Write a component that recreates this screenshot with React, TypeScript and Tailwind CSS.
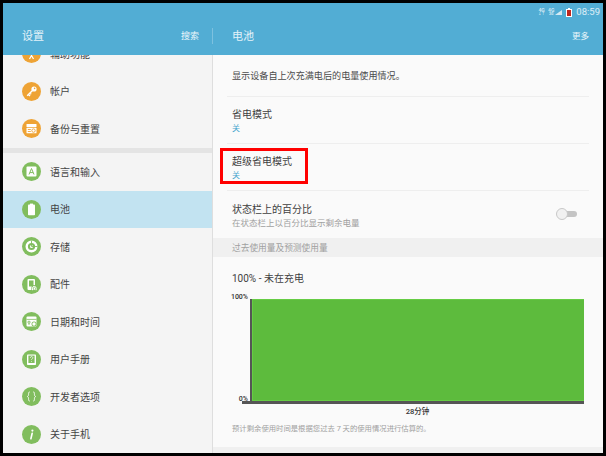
import React from "react";

const FONT = "[font-family:Roboto,'Noto_Sans_CJK_SC','Noto_Sans',sans-serif]";

function G({ children }: { children: React.ReactNode }) {
  return (
    <svg viewBox="0 0 19 19" className="w-[19px] h-[19px]" fill="none">
      {children}
    </svg>
  );
}

const icons: Record<string, React.ReactNode> = {
  access: (
    <G>
      <circle cx="9.5" cy="6" r="1.3" fill="#fff" />
      <path d="M6.5 8h6M9.5 8v3.5M9.5 11.5l-2 3.5M9.5 11.5l2 3.5" stroke="#fff" strokeWidth="1.2" />
    </G>
  ),
  key: (
    <G>
      <circle cx="12" cy="7" r="2.6" fill="#fff" />
      <circle cx="12.6" cy="6.4" r="0.8" fill="#eea335" />
      <path d="M10.5 8.5L5.2 13.8M6.5 12.5l1.5 1.5M8 11l1.2 1.2" stroke="#fff" strokeWidth="1.4" />
    </G>
  ),
  backup: (
    <G>
      <rect x="4.5" y="5" width="10" height="3" rx="0.6" fill="#fff" />
      <rect x="4.5" y="8.8" width="10" height="5.5" rx="0.6" fill="#fff" />
      <circle cx="11.5" cy="11.6" r="1.7" stroke="#eea335" strokeWidth="0.9" />
      <path d="M5.8 10.5h3M5.8 12.5h3" stroke="#eea335" strokeWidth="0.9" />
    </G>
  ),
  lang: (
    <G>
      <rect x="4.5" y="4.5" width="10" height="10" rx="1" fill="#fff" />
      <path d="M7 12.5l2.5-6 2.5 6M7.9 10.6h3.2" stroke="#81bd5e" strokeWidth="1" />
    </G>
  ),
  battery: (
    <G>
      <rect x="8" y="3.6" width="3" height="1.4" fill="#fff" />
      <rect x="6" y="4.6" width="7" height="10.6" rx="0.8" fill="#fff" />
    </G>
  ),
  storage: (
    <G>
      <circle cx="9.5" cy="9.5" r="4.8" stroke="#fff" strokeWidth="2.4" />
      <circle cx="9.5" cy="9.5" r="1.5" fill="#fff" />
      <path d="M9.5 3.5v6h6" stroke="#81bd5e" strokeWidth="0.9" />
    </G>
  ),
  parts: (
    <G>
      <rect x="5.5" y="4" width="7.5" height="11" rx="1" fill="#fff" />
      <rect x="7" y="5.5" width="4.5" height="6" fill="#81bd5e" />
      <path d="M10.5 15v-2a1.8 1.8 0 0 1 3.6 0v2" stroke="#81bd5e" strokeWidth="2.2" />
      <path d="M10.5 15.2v-2a1.8 1.8 0 0 1 3.6 0v2" stroke="#fff" strokeWidth="1" />
    </G>
  ),
  date: (
    <G>
      <rect x="4.5" y="4.5" width="10" height="10" rx="1" fill="#fff" />
      <path d="M4.5 7.4h10" stroke="#81bd5e" strokeWidth="0.8" />
      <path d="M6 9.3h2v1.8H6zM6 12h2" stroke="#81bd5e" strokeWidth="0.8" />
      <circle cx="12" cy="12" r="2.5" fill="#81bd5e" />
      <circle cx="12" cy="12" r="1.7" fill="#fff" />
    </G>
  ),
  manual: (
    <G>
      <rect x="5" y="4.5" width="9" height="10.5" rx="0.8" fill="#fff" />
      <rect x="6.4" y="5.6" width="6.2" height="7.4" fill="#81bd5e" />
      <path d="M8.4 7.8a1.2 1.2 0 1 1 1.8 1c-.5.3-.7.5-.7 1.1M9.5 11v.8" stroke="#fff" strokeWidth="0.7" />
    </G>
  ),
  dev: (
    <G>
      <path d="M7.8 5c-1.2 0-1.2.6-1.2 1.6 0 1.7-.3 2.5-1.1 2.9.8.4 1.1 1.2 1.1 2.9 0 1 0 1.6 1.2 1.6M11.2 5c1.2 0 1.2.6 1.2 1.6 0 1.7.3 2.5 1.1 2.9-.8.4-1.1 1.2-1.1 2.9 0 1 0 1.6-1.2 1.6" stroke="#fff" strokeWidth="0.9" />
    </G>
  ),
  info: (
    <G>
      <circle cx="10.4" cy="5.6" r="1.1" fill="#fff" />
      <path d="M10.2 8.2l-1.3 5.6" stroke="#fff" strokeWidth="1.6" strokeLinecap="round" />
    </G>
  ),
};

function Item({ icon, label, color, selected }: { icon: string; label: string; color: string; selected?: boolean }) {
  return (
    <div className={`h-[37.5px] flex items-center pl-[19px] gap-[9px] shrink-0 ${selected ? "bg-[#c2e3f1]" : ""}`}>
      <div className={`w-[19px] h-[19px] rounded-full shrink-0 ${color}`}>{icons[icon]}</div>
      <span className="text-[10px] leading-none text-[#444] pt-[2px]">{label}</span>
    </div>
  );
}

function SettingRow({ title, status }: { title: string; status: string }) {
  return (
    <div className="h-[47px] mx-[14px] border-b border-[#eeeeee] pl-[5px] pt-[4px] flex flex-col justify-center gap-[3px] shrink-0">
      <div className="text-[10px] leading-[12px] text-[#3f3f3f]">{title}</div>
      <div className="text-[8px] leading-[10px] text-[#4aa7cf]">{status}</div>
    </div>
  );
}

function Net({ top, bottom }: { top: string; bottom: string }) {
  return (
    <span className="flex flex-col items-center text-white/75 font-bold">
      <span className="text-[5px] leading-[5px]">{top}</span>
      <span className="text-[3.5px] leading-[3.5px]">{bottom}</span>
    </span>
  );
}

export default function App() {
  const orange = "bg-[#eea335]";
  const green = "bg-[#81bd5e]";
  return (
    <div className={`w-[606px] h-[456px] bg-black pl-[3px] pt-[3px] pr-[3px] pb-[3px] overflow-hidden ${FONT}`}>
      <div className="relative w-[600px] h-[450px] flex flex-col overflow-hidden bg-[#fafafa]">
        {/* header */}
        <div className="h-[52px] bg-[#52add4] flex flex-col shrink-0">
          <div className="h-[17px] flex items-center justify-end pr-[3px] gap-[3px] pt-[1px]">
            <Net top="4G" bottom="↓↑" />
            <Net top="4G" bottom="2G" />
            <svg viewBox="0 0 7 6" className="w-[7px] h-[6px] -ml-[2px]">
              <path d="M0 6L7 1v5z" fill="#ffffff" fillOpacity="0.75" />
            </svg>
            <svg viewBox="0 0 6 9" className="w-[6px] h-[9px] ml-[1px] mr-[1px]">
              <rect x="0" y="1" width="6" height="8" fill="#ffffff" />
              <rect x="2" y="0" width="2" height="1" fill="#ffffff" />
              <rect x="1" y="2" width="4" height="6" fill="#c0271f" />
            </svg>
            <span className="text-[9.5px] leading-none text-white/80">08:59</span>
          </div>
          <div className="flex-1 flex items-start">
            <div className="w-[210px] h-[16px] flex items-center justify-between pl-[19px] pr-[13px] mt-[8px] border-r border-white/25 shrink-0">
              <span className="text-[11px] leading-none text-white/85">设置</span>
              <span className="text-[9px] leading-none text-white/90">搜索</span>
            </div>
            <div className="flex-1 h-[16px] flex items-center justify-between pl-[19px] pr-[14px] mt-[8px]">
              <span className="text-[11px] leading-none text-white/85">电池</span>
              <span className="text-[8.5px] leading-none text-white/90">更多</span>
            </div>
          </div>
        </div>
        {/* body */}
        <div className="flex-1 flex min-h-0">
          <div className="w-[210px] bg-[#f4f4f4] border-r border-[#dedede] overflow-hidden flex flex-col shrink-0">
            <div className="-mt-[20px]">
              <Item icon="access" label="辅助功能" color={orange} />
            </div>
            <Item icon="key" label="帐户" color={orange} />
            <Item icon="backup" label="备份与重置" color={orange} />
            <div className="h-[5.5px] bg-[#e4e4e4] shrink-0" />
            <Item icon="lang" label="语言和输入" color={green} />
            <Item icon="battery" label="电池" color={green} selected />
            <Item icon="storage" label="存储" color={green} />
            <Item icon="parts" label="配件" color={green} />
            <Item icon="date" label="日期和时间" color={green} />
            <Item icon="manual" label="用户手册" color={green} />
            <Item icon="dev" label="开发者选项" color={green} />
            <Item icon="info" label="关于手机" color={green} />
          </div>
          <div className="flex-1 flex flex-col min-w-0">
            <div className="h-[41.5px] mx-[14px] border-b border-[#eeeeee] pl-[5px] pt-[2px] flex items-center shrink-0">
              <span className="text-[9.1px] leading-none text-[#4a4a4a]">显示设备自上次充满电后的电量使用情况。</span>
            </div>
            <SettingRow title="省电模式" status="关" />
            <SettingRow title="超级省电模式" status="关" />
            <div className="h-[47.5px] mx-[14px] pl-[5px] flex items-center justify-between shrink-0">
              <div className="flex flex-col gap-[2px] pt-[4px]">
                <div className="text-[10px] leading-[12px] text-[#3f3f3f]">状态栏上的百分比</div>
                <div className="text-[8.5px] leading-[10px] text-[#a0a0a0]">在状态栏上以百分比显示剩余电量</div>
              </div>
              <div className="relative w-[21px] h-[12px] mr-[12px] flex items-center shrink-0">
                <div className="w-[19px] h-[6px] rounded-full bg-[#c4c4c4] ml-[2px]" />
                <div className="absolute left-0 top-0 w-[12px] h-[12px] rounded-full bg-[#f1f1f1] border border-[#c8c8c8]" />
              </div>
            </div>
            <div className="h-[18.5px] bg-[#f0f0f0] pl-[19px] pt-[2px] flex items-center shrink-0">
              <span className="text-[8.7px] leading-none text-[#a0a0a0]">过去使用量及预测使用量</span>
            </div>
            <div className="h-[42px] pl-[19px] pt-[2px] flex items-center shrink-0">
              <span className="text-[10px] leading-none text-[#3f3f3f]">100% - 未在充电</span>
            </div>
            {/* chart */}
            <div className="flex pl-[19px] pr-[19px] shrink-0">
              <div className="w-[18px] h-[105px] flex flex-col justify-between items-end pr-[2px] shrink-0">
                <span className="text-[7px] leading-none font-medium text-[#333] -mt-[5px]">100%</span>
                <span className="text-[7px] leading-none font-medium text-[#333] mb-[1px]">0%</span>
              </div>
              <div className="flex-1 h-[105px] border-l-2 border-[#555] flex flex-col">
                <div className="flex-1 bg-[#5dbb3d] border border-[#66cc44] border-r-0" />
                <div className="h-[2.5px] bg-[#555] -ml-[10px]" />
              </div>
            </div>
            <div className="text-center pl-[19px] text-[7.5px] leading-none font-medium text-[#333] mt-[4px] shrink-0">28分钟</div>
            <div className="pl-[19px] text-[7.35px] leading-none text-[#a0a0a0] mt-[10px] whitespace-nowrap shrink-0">预计剩余使用时间是根据您过去 7 天的使用情况进行估算的。</div>
            <div className="flex-1" />
            <div className="h-[6px] bg-[#f0f0f0] shrink-0" />
          </div>
        </div>
        {/* red highlight */}
        <div className="absolute left-[217px] top-[145px] w-[88px] h-[36px] border-[3px] border-[#ff0000]" />
      </div>
    </div>
  );
}
